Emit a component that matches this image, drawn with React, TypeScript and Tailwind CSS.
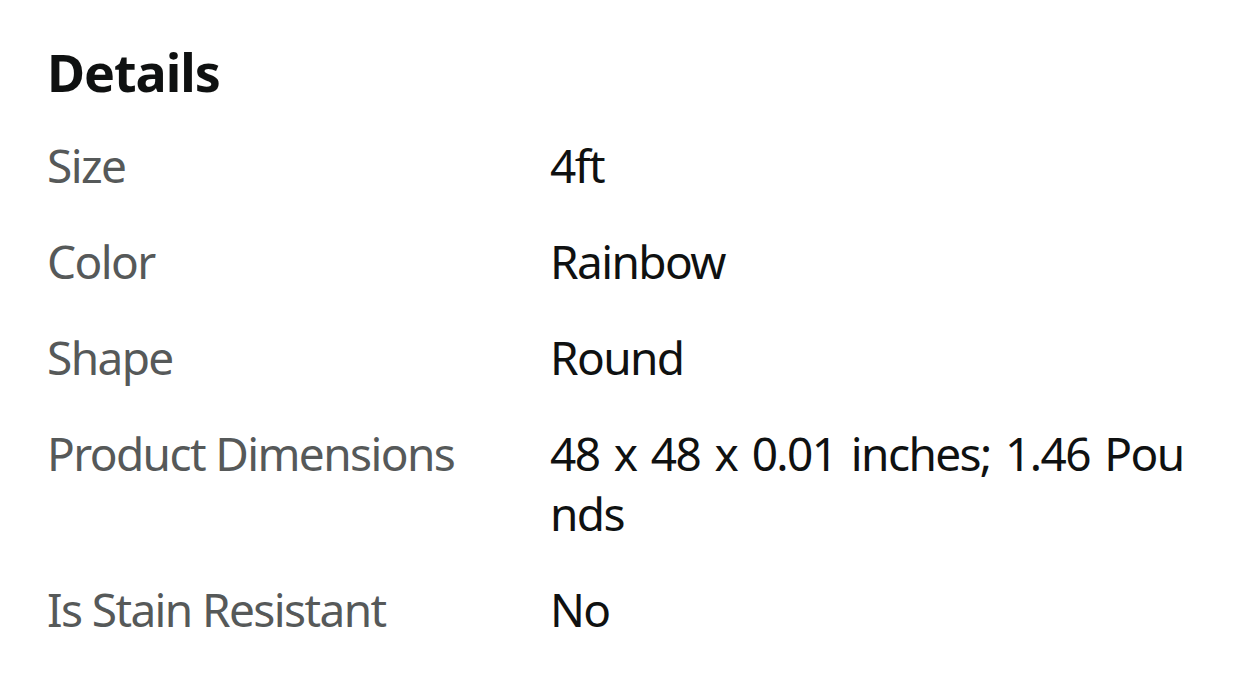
const rows: { label: string; value: string }[] = [
  { label: "Size", value: "4ft" },
  { label: "Color", value: "Rainbow" },
  { label: "Shape", value: "Round" },
  { label: "Product Dimensions", value: "48 x 48 x 0.01 inches; 1.46 Pounds" },
  { label: "Is Stain Resistant", value: "No" },
]

export default function App() {
  return (
    <div className="w-[1242px] h-[680px] bg-white overflow-hidden font-['Noto_Sans',sans-serif]">
      <div className="pl-[47px] pr-[47px] pt-[42px]">
        <h2 className="text-[52px] leading-[60px] font-bold tracking-[-0.02em] text-[#0f1111]">Details</h2>

        <div className="mt-[33px] flex flex-col gap-9">
          {rows.map((row) => (
            <div key={row.label} className="flex text-[46px] leading-[60px] tracking-[-0.035em]">
              <div className="w-[503px] shrink-0 text-[#565959]">{row.label}</div>
              <div className="w-[640px] break-all [word-spacing:4px] text-[#0f1111]">{row.value}</div>
            </div>
          ))}
        </div>
      </div>
    </div>
  )
}
